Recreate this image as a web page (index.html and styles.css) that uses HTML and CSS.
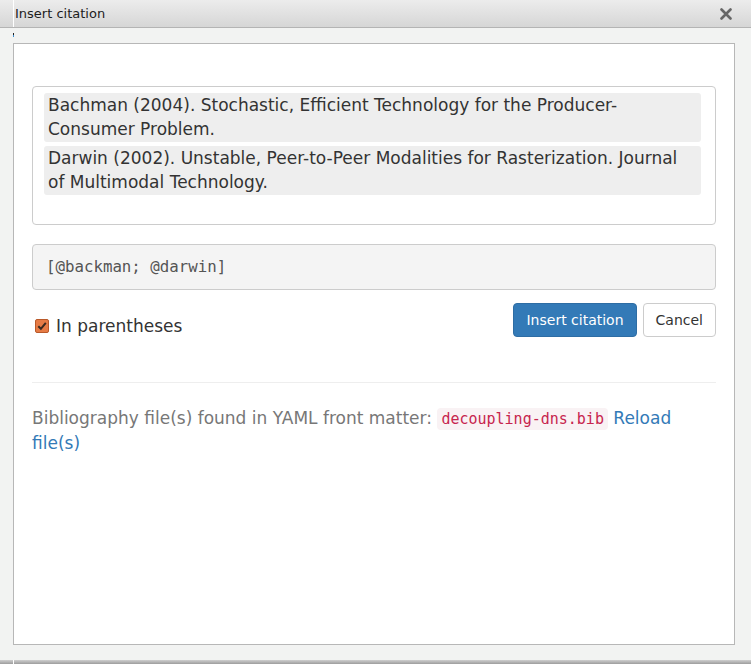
FILE: index.html
```html
<!DOCTYPE html>
<html>
<head>
<meta charset="utf-8">
<link rel="stylesheet" href="styles.css">
</head>
<body>
<div class="window">
  <div class="titlebar">
    <span class="title">Insert citation</span>
    <svg class="close" width="12" height="12" viewBox="0 0 12 12"><path d="M1.5 1.5 L10.5 10.5 M10.5 1.5 L1.5 10.5" stroke="#666666" stroke-width="2.6" stroke-linecap="round"/></svg>
  </div>
  <span class="seam seam-top"></span>
  <span class="tick"></span>
  <div class="frame">
    <div class="panel">
      <div class="list">
        <div class="item">Bachman (2004). Stochastic, Efficient Technology for the Producer-Consumer Problem.</div>
        <div class="item">Darwin (2002). Unstable, Peer-to-Peer Modalities for Rasterization. Journal of Multimodal Technology.</div>
      </div>
      <div class="preview">[@backman; @darwin]</div>
      <div class="actions">
        <label class="check">
          <span class="box"><svg width="12" height="12" viewBox="0 0 12 12"><path d="M2.3 6.2 L4.9 8.8 L9.8 2.8" fill="none" stroke="#3a2a20" stroke-width="2"/></svg></span>
          <span>In parentheses</span>
        </label>
        <div class="buttons">
          <button class="btn btn-primary">Insert citation</button>
          <button class="btn btn-default">Cancel</button>
        </div>
      </div>
      <hr class="sep">
      <p class="bib">Bibliography file(s) found in YAML front matter: <code>decoupling-dns.bib</code> <a href="#">Reload file(s)</a></p>
    </div>
  </div>
  <div class="bottombar"></div>
  <span class="seam seam-bottom"></span>
</div>
</body>
</html>
```
FILE: styles.css
```css
html, body {
  margin: 0;
  padding: 0;
}
* {
  box-sizing: border-box;
}
body {
  width: 751px;
  height: 664px;
  overflow: hidden;
  background: #f2f3f2;
  font-family: "DejaVu Sans", "Noto Sans", sans-serif;
}
.window {
  position: relative;
  width: 751px;
  height: 664px;
  display: flex;
  flex-direction: column;
}
.titlebar {
  height: 28px;
  flex: none;
  border-bottom: 1px solid #b4b4b4;
  background: linear-gradient(#ececec, #d6d6d6);
  display: flex;
  align-items: center;
  justify-content: space-between;
  padding: 0 19px 0 15px;
}
.title {
  font-family: "DejaVu Sans", sans-serif;
  font-size: 13px;
  color: #1c1c1c;
}
.close {
  display: block;
}
.seam {
  position: absolute;
  left: 13px;
  width: 1px;
  background: #ffffff;
}
.seam-top {
  top: 0;
  height: 27px;
}
.seam-bottom {
  bottom: 0;
  height: 4px;
}
.tick {
  position: absolute;
  left: 13px;
  top: 33px;
  width: 1px;
  height: 4px;
  background: linear-gradient(#222 0 40%, #3c8ed0 40%);
}
.frame {
  flex: 1;
  padding: 15px 16px 15px 13px;
  display: flex;
}
.panel {
  flex: 1;
  background: #ffffff;
  border: 1px solid #b7b7b7;
  padding: 42px 18px 0 18px;
  color: #333333;
  font-size: 17px;
  line-height: 24px;
}
.list {
  height: 139px;
  border: 1px solid #cccccc;
  border-radius: 4px;
  padding: 6px 14px 0 11px;
  display: flex;
  flex-direction: column;
  gap: 4px;
}
.item {
  background: #eeeeee;
  border-radius: 3px;
  padding: 0 5px 1px 4px;
}
.preview {
  margin-top: 19px;
  height: 46px;
  border: 1px solid #cccccc;
  border-radius: 4px;
  background: #f4f4f4;
  padding: 0 13px;
  display: flex;
  align-items: center;
  font-family: "DejaVu Sans Mono", monospace;
  font-size: 15.75px;
  color: #555555;
}
.actions {
  margin-top: 13px;
  display: flex;
  justify-content: space-between;
  align-items: flex-start;
}
.check {
  margin-top: 11px;
  display: flex;
  align-items: center;
  gap: 7px;
  padding-left: 3px;
  font-size: 17px;
}
.box {
  width: 14px;
  height: 14px;
  border: 1px solid #b9592a;
  border-radius: 2px;
  background: #e67b45;
  display: flex;
  align-items: center;
  justify-content: center;
}
.box svg {
  display: block;
}
.buttons {
  display: flex;
  gap: 6px;
}
.btn {
  height: 34px;
  padding: 0 12px;
  font-family: "DejaVu Sans", sans-serif;
  font-size: 14px;
  border-radius: 4px;
  border: 1px solid #cccccc;
  cursor: pointer;
}
.btn-primary {
  background: #337ab7;
  border-color: #2e6da4;
  color: #ffffff;
}
.btn-default {
  background: #ffffff;
  color: #333333;
}
.sep {
  margin: 44px 0 0 0;
  border: 0;
  border-top: 1px solid #eeeeee;
}
.bib {
  margin: 23px 0 0 0;
  font-family: "DejaVu Sans", sans-serif;
  font-size: 17px;
  line-height: 24px;
  color: #777777;
}
.bib code {
  font-family: "DejaVu Sans Mono", monospace;
  font-size: 15px;
  color: #c7254e;
  background: #f9f2f4;
  border-radius: 4px;
  padding: 2px 4px;
}
.bib a {
  color: #337ab7;
  text-decoration: none;
}
.bottombar {
  flex: none;
  height: 4px;
  background: linear-gradient(#cfcfcf, #9d9d9d);
}
```
